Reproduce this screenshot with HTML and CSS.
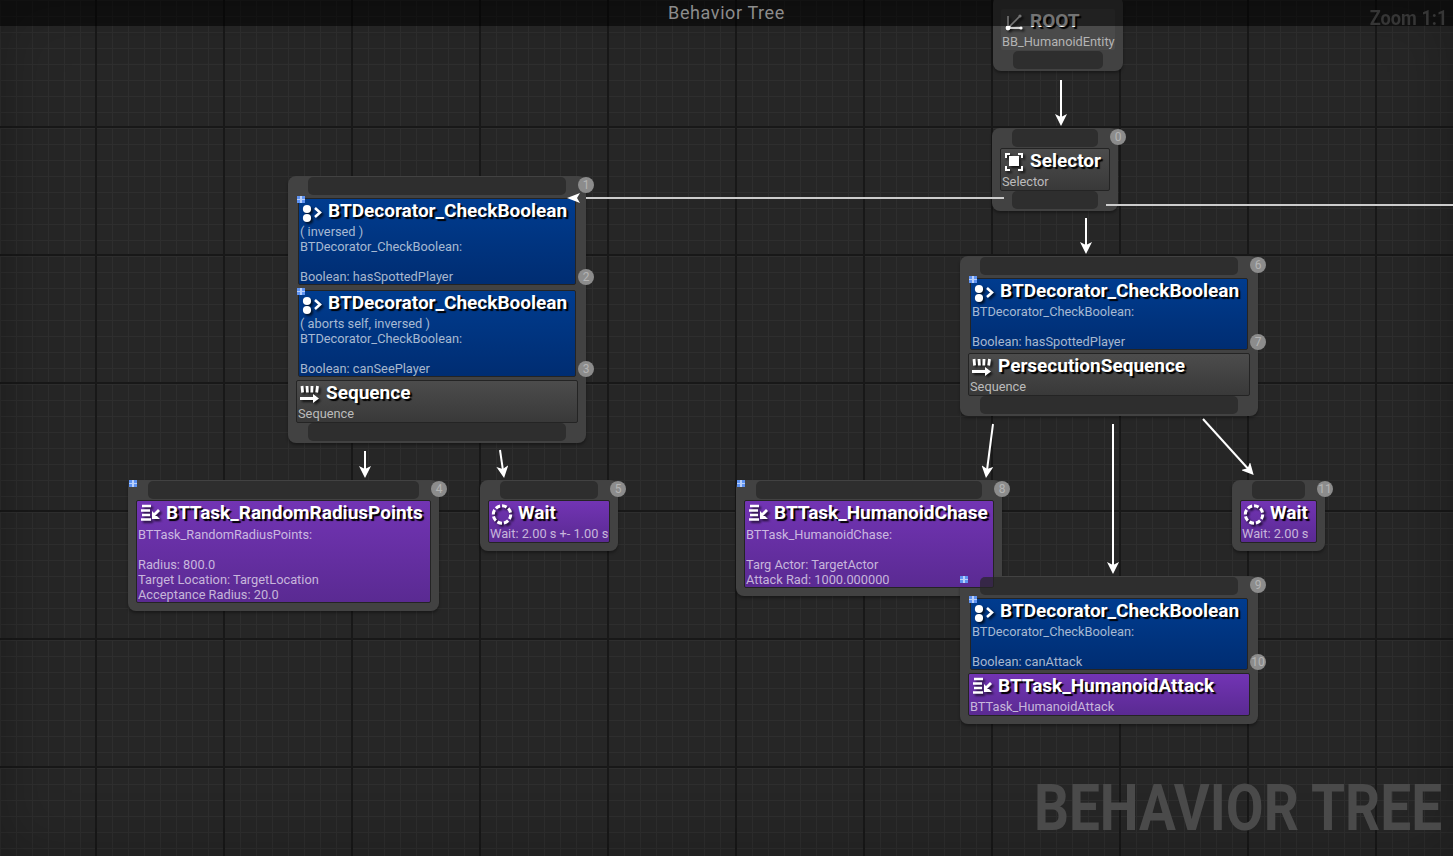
FILE: index.html
```html
<!DOCTYPE html>
<html lang="en">

<head>
  <meta charset="UTF-8">
  <title>Behavior Tree</title>
  <link rel="stylesheet" href="styles.css">
</head>

<body>
  <svg class="defs" width="0" height="0">
    <symbol id="icon-decorator" viewBox="0 0 26 24">
      <circle cx="8" cy="9" r="4.100" fill="#fff"/>
      <circle cx="8" cy="18" r="4.100" fill="#fff"/>
      <path d="M16 8l5 4.500-5 4.500" fill="none" stroke="#fff" stroke-width="2.600"/>
    </symbol>
    <symbol id="icon-sequence" viewBox="0 0 26 26">
      <path d="M5 5l.6 6.500M10 5l.4 6.500M15 5l-.2 6.500M20.500 5l-.8 6.500" fill="none" stroke="#fff" stroke-width="2.800"/>
      <path d="M3 16h13v-3l6 4.500-6 4.500v-3H3z" fill="#fff"/>
    </symbol>
    <symbol id="icon-selector" viewBox="0 0 26 26">
      <rect x="8" y="7" width="10" height="10" fill="#fff"/>
      <path d="M9 5H5v4M17 5h4v4M9 21H5v-4M17 21h4v-4" fill="none" stroke="#fff" stroke-width="2"/>
    </symbol>
    <symbol id="icon-task" viewBox="0 0 26 26">
      <path d="M5 5h9M4 9.500h9M5 14h8M4 18.500h10" fill="none" stroke="#fff" stroke-width="2.400"/>
      <path d="M22 9l-5 5" fill="none" stroke="#fff" stroke-width="2.800"/>
      <path d="M15 10v8h8l-3-3h-2v-2z" fill="#fff"/>
    </symbol>
    <symbol id="icon-wait" viewBox="0 0 26 26">
      <circle cx="13" cy="13.500" r="8.700" fill="none" stroke="#fff" stroke-width="3" stroke-dasharray="4.800 2"/>
    </symbol>
    <symbol id="icon-root" viewBox="0 0 26 26">
      <path d="M7 7v12h13M7 19L19 7" fill="none" stroke="#fff" stroke-width="1.600"/>
      <circle cx="7" cy="19" r="2.400" fill="#fff"/>
      <circle cx="20" cy="19" r="1.600" fill="#fff"/>
      <circle cx="19" cy="7" r="1.600" fill="#fff"/>
    </symbol>
  </svg>

  <div class="graph">
    <div class="node node-root">
      <div class="box box-root">
        <div class="box-title">
          <svg class="icon"><use href="#icon-root"/></svg>
          <span>ROOT</span>
        </div>
        <div class="box-text">BB_HumanoidEntity</div>
      </div>
      <div class="pin-bar"></div>
    </div>

    <div class="node node-selector">
      <div class="pin-bar"></div>
      <span class="index index-top">0</span>
      <div class="box box-gray">
        <div class="box-title">
          <svg class="icon"><use href="#icon-selector"/></svg>
          <span>Selector</span>
        </div>
        <div class="box-text">Selector</div>
      </div>
      <div class="pin-bar"></div>
    </div>

    <div class="node node-1">
      <div class="pin-bar"></div>
      <span class="index index-top">1</span>
      <div class="deco">
        <span class="badge badge-deco"></span>
        <div class="box-title">
          <svg class="icon"><use href="#icon-decorator"/></svg>
          <span>BTDecorator_CheckBoolean</span>
        </div>
        <div class="box-text">( inversed )<br>BTDecorator_CheckBoolean:<br><br>Boolean: hasSpottedPlayer</div>
        <span class="index index-deco">2</span>
      </div>
      <div class="deco">
        <span class="badge badge-deco"></span>
        <div class="box-title">
          <svg class="icon"><use href="#icon-decorator"/></svg>
          <span>BTDecorator_CheckBoolean</span>
        </div>
        <div class="box-text">( aborts self, inversed )<br>BTDecorator_CheckBoolean:<br><br>Boolean: canSeePlayer</div>
        <span class="index index-deco">3</span>
      </div>
      <div class="box box-gray">
        <div class="box-title">
          <svg class="icon"><use href="#icon-sequence"/></svg>
          <span>Sequence</span>
        </div>
        <div class="box-text">Sequence</div>
      </div>
      <div class="pin-bar"></div>
    </div>

    <div class="node node-4">
      <span class="badge badge-node"></span>
      <div class="pin-bar"></div>
      <span class="index index-top">4</span>
      <div class="box box-purple box-tall">
        <div class="box-title">
          <svg class="icon"><use href="#icon-task"/></svg>
          <span>BTTask_RandomRadiusPoints</span>
        </div>
        <div class="box-text">BTTask_RandomRadiusPoints:<br><br>Radius: 800.0<br>Target Location: TargetLocation<br>Acceptance Radius: 20.0</div>
      </div>
    </div>

    <div class="node node-5">
      <div class="pin-bar"></div>
      <span class="index index-top">5</span>
      <div class="box box-purple">
        <div class="box-title">
          <svg class="icon"><use href="#icon-wait"/></svg>
          <span>Wait</span>
        </div>
        <div class="box-text">Wait: 2.00 s +- 1.00 s</div>
      </div>
    </div>

    <div class="node node-6">
      <div class="pin-bar"></div>
      <span class="index index-top">6</span>
      <div class="deco">
        <span class="badge badge-deco"></span>
        <div class="box-title">
          <svg class="icon"><use href="#icon-decorator"/></svg>
          <span>BTDecorator_CheckBoolean</span>
        </div>
        <div class="box-text">BTDecorator_CheckBoolean:<br><br>Boolean: hasSpottedPlayer</div>
        <span class="index index-deco">7</span>
      </div>
      <div class="box box-gray">
        <div class="box-title">
          <svg class="icon"><use href="#icon-sequence"/></svg>
          <span>PersecutionSequence</span>
        </div>
        <div class="box-text">Sequence</div>
      </div>
      <div class="pin-bar"></div>
    </div>

    <div class="node node-8">
      <span class="badge badge-node"></span>
      <div class="pin-bar"></div>
      <span class="index index-top">8</span>
      <div class="box box-purple box-tall box-raised">
        <div class="box-title">
          <svg class="icon"><use href="#icon-task"/></svg>
          <span>BTTask_HumanoidChase</span>
        </div>
        <div class="box-text">BTTask_HumanoidChase:<br><br>Targ Actor: TargetActor<br>Attack Rad: 1000.000000</div>
        <span class="badge badge-corner"></span>
      </div>
    </div>

    <div class="node node-9">
      <div class="pin-bar pin-bar-glass"></div>
      <span class="index index-top">9</span>
      <div class="deco">
        <span class="badge badge-deco"></span>
        <div class="box-title">
          <svg class="icon"><use href="#icon-decorator"/></svg>
          <span>BTDecorator_CheckBoolean</span>
        </div>
        <div class="box-text">BTDecorator_CheckBoolean:<br><br>Boolean: canAttack</div>
        <span class="index index-deco">10</span>
      </div>
      <div class="box box-purple">
        <div class="box-title">
          <svg class="icon"><use href="#icon-task"/></svg>
          <span>BTTask_HumanoidAttack</span>
        </div>
        <div class="box-text">BTTask_HumanoidAttack</div>
      </div>
    </div>

    <div class="node node-11">
      <div class="pin-bar"></div>
      <span class="index index-top">11</span>
      <div class="box box-purple">
        <div class="box-title">
          <svg class="icon"><use href="#icon-wait"/></svg>
          <span>Wait</span>
        </div>
        <div class="box-text">Wait: 2.00 s</div>
      </div>
    </div>

    <svg class="wires" width="1453" height="856">
      <defs>
        <marker id="head" viewBox="0 0 12 12" refX="8" refY="6" markerWidth="12" markerHeight="12" markerUnits="userSpaceOnUse" orient="auto">
          <path d="M0 0L12 6 0 12 3 6z" fill="#fff"/>
        </marker>
      </defs>
      <path class="wire" d="M1061 80V122"/>
      <path class="wire" d="M1086 218V250"/>
      <path class="wire" d="M365 451V474"/>
      <path class="wire" d="M500 450L503.500 474"/>
      <path class="wire" d="M993 424L986.500 474"/>
      <path class="wire" d="M1113 424V570"/>
      <path class="wire" d="M1203 419L1251 472"/>
      <path class="wire-long" d="M1004 198H586"/>
      <path class="wire-long" d="M1106 205H1453"/>
      <path d="M567 198L580 193 577 198 580 203z" fill="#fff"/>
    </svg>

    <div class="top-bar">Behavior Tree</div>
    <div class="zoom-label">Zoom 1:1</div>
    <div class="watermark">BEHAVIOR TREE</div>
  </div>
</body>

</html>
```

FILE: styles.css
```css
body {
  margin: 0;
  background-color: #262626;
  font-family: Roboto, "Liberation Sans", sans-serif;
  overflow: hidden;
}

.defs {
  position: absolute;
}

.graph {
  position: relative;
  width: 1453px;
  height: 856px;
  overflow: hidden;
  background-color: #262626;
  background-image:
    linear-gradient(to right, #181818 2px, transparent 2px),
    linear-gradient(to bottom, #181818 2px, transparent 2px),
    linear-gradient(to right, #2e2e2e 1px, transparent 1px),
    linear-gradient(to bottom, #2e2e2e 1px, transparent 1px);
  background-size: 128px 128px, 128px 128px, 16px 16px, 16px 16px;
  background-position: 95px 0, 0 126px, 0 0, 0 0;
  box-shadow: inset 0 0 60px rgba(0, 0, 0, 0.25);
}

.top-bar {
  position: absolute;
  left: 0;
  top: 0;
  z-index: 5;
  width: 100%;
  height: 26px;
  background-color: rgba(0, 0, 0, 0.55);
  color: #8c8c8c;
  font-size: 18px;
  letter-spacing: 0.6px;
  line-height: 25px;
  text-align: center;
}

.zoom-label {
  position: absolute;
  right: 6px;
  top: 6px;
  z-index: 5;
  color: #363636;
  font-size: 20px;
  font-weight: 700;
  line-height: 24px;
  transform: scaleX(0.91);
  transform-origin: right center;
}

.watermark {
  position: absolute;
  right: 11px;
  top: 770px;
  color: #4a4a4a;
  font-size: 65px;
  font-weight: 700;
  line-height: 76px;
  white-space: nowrap;
  transform: scaleX(0.845);
  transform-origin: right center;
}

.wires {
  position: absolute;
  left: 0;
  top: 0;
  z-index: 4;
  pointer-events: none;
}

.wire {
  fill: none;
  stroke: #fff;
  stroke-width: 2;
  marker-end: url(#head);
}

.wire-long {
  fill: none;
  stroke: #cccccc;
  stroke-width: 2;
}

/* nodes */
.node {
  position: absolute;
  box-sizing: border-box;
  display: flex;
  flex-direction: column;
  padding: 1px 8px 0;
  border-radius: 8px;
  background-color: #424242;
  box-shadow: 0 2px 3px rgba(0, 0, 0, 0.35);
}

.node-root {
  left: 993px;
  top: -4px;
  width: 130px;
  height: 75px;
  padding-top: 13px;
}

.node-selector {
  left: 992px;
  top: 128px;
  width: 126px;
  height: 83px;
}

.node-1 {
  left: 288px;
  top: 176px;
  width: 298px;
  height: 267px;
}

.node-4 {
  left: 128px;
  top: 480px;
  width: 311px;
  height: 131px;
}

.node-5 {
  left: 480px;
  top: 480px;
  width: 138px;
  height: 71px;
}

.node-6 {
  left: 960px;
  top: 256px;
  width: 298px;
  height: 160px;
}

.node-8 {
  left: 736px;
  top: 480px;
  width: 266px;
  height: 116px;
}

.node-9 {
  left: 960px;
  top: 576px;
  width: 298px;
  height: 148px;
}

.node-11 {
  left: 1232px;
  top: 480px;
  width: 93px;
  height: 71px;
}

.pin-bar {
  flex: none;
  height: 18px;
  margin: 0 12px;
  border-radius: 5px;
  background-color: #2e2e2e;
}

.pin-bar-glass {
  position: relative;
  z-index: 3;
  background-color: rgba(38, 38, 38, 0.7);
}

.box,
.deco {
  position: relative;
  flex: none;
  box-sizing: border-box;
  border: 1px solid #242424;
  border-radius: 2px;
  color: #fff;
}

.box {
  margin-top: 1px;
  padding-bottom: 1px;
}

.deco {
  margin: 3px 2px 0;
  background: linear-gradient(#003c8f, #002d72);
}

.deco + .deco {
  margin-top: 5px;
}

.deco + .box {
  margin-top: 3px;
}

.box-gray {
  background: linear-gradient(#4c4c4c, #393939);
}

.box-purple {
  background: linear-gradient(#7234b4, #5a2a92);
}

.box-tall {
  padding-bottom: 0;
}

.box-tall .box-text {
  padding-top: 1px;
}

.box-raised {
  z-index: 2;
}

.box-root {
  margin: 0 0 1px;
  border: none;
  background-color: #4a4a4a;
}

.box-title {
  display: flex;
  align-items: center;
  height: 25px;
  font-size: 19px;
  font-weight: 700;
  white-space: nowrap;
  text-shadow: 2px 2px 1px #000;
}

.box-title span {
  margin-bottom: 2px;
}

.icon {
  flex: none;
  width: 26px;
  height: 26px;
  margin-right: 3px;
  filter: drop-shadow(2px 2px 1px rgba(0, 0, 0, 0.7));
}

.deco .icon {
  height: 24px;
}

.box-text {
  padding-left: 1px;
  color: rgba(255, 255, 255, 0.66);
  font-size: 12.8px;
  line-height: 15px;
  white-space: nowrap;
}

.box-root .box-text {
  color: #b4b4b4;
}

.index {
  position: absolute;
  z-index: 3;
  width: 16px;
  height: 16px;
  border-radius: 50%;
  background-color: #8c8c8c;
  color: #b4b4b4;
  font-size: 12px;
  line-height: 16px;
  text-align: center;
}

.index-top {
  right: -8px;
  top: 1px;
}

.index-deco {
  right: -19px;
  bottom: -1px;
}

.badge {
  position: absolute;
  z-index: 3;
  width: 8px;
  height: 7px;
  background:
    linear-gradient(#b9d0fb, #b9d0fb) 3px 0 / 2px 100% no-repeat,
    linear-gradient(#b9d0fb, #b9d0fb) 0 3px / 100% 1px no-repeat,
    #5f93f2;
}

.badge-deco {
  left: -2px;
  top: -3px;
}

.badge-node {
  left: 1px;
  top: 0;
}

.badge-corner {
  right: 25px;
  bottom: 4px;
}
```
